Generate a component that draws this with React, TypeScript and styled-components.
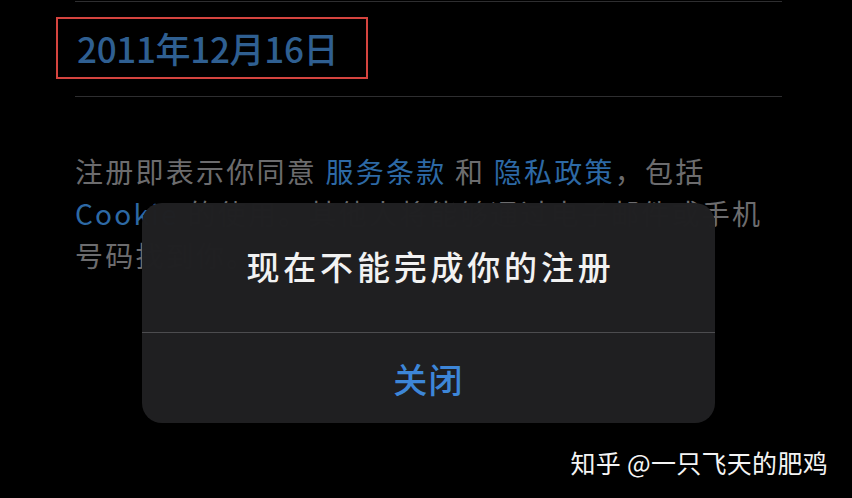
import React from "react";
import styled, { createGlobalStyle } from "styled-components";

const GlobalStyle = createGlobalStyle`
  html, body {
    margin: 0;
    padding: 0;
    background: #000;
  }
  body {
    font-family: "Noto Sans CJK SC", "Noto Sans", sans-serif;
  }
`;

const Screen = styled.div`
  position: relative;
  width: 852px;
  height: 498px;
  overflow: hidden;
  background: #000;
`;

const Content = styled.div`
  display: flex;
  flex-direction: column;
  padding: 1px 70px 0 75px;
`;

const Divider = styled.div`
  height: 1px;
  background: #2e2e30;
`;

const DateBox = styled.div`
  display: flex;
  align-items: center;
  box-sizing: border-box;
  width: 312px;
  height: 62px;
  margin: 15px 0 17px -19px;
  padding: 0 0 2px 19px;
  border: 2px solid #d5443f;
  color: #2f5f91;
  font-size: 35px;
  font-weight: 500;
  letter-spacing: -0.3px;
`;

const Paragraph = styled.div`
  display: flex;
  flex-direction: column;
  margin-top: 53px;
  color: #6c6c6e;
  font-size: 28px;
  line-height: 42px;
  letter-spacing: 2.25px;
  white-space: nowrap;
`;

const Link = styled.span`
  color: #2d69a5;
`;

const Alert = styled.div`
  position: absolute;
  left: 142px;
  top: 203px;
  width: 573px;
  height: 220px;
  display: flex;
  flex-direction: column;
  border-radius: 20px;
  background: rgba(31, 31, 33, 0.99);
  overflow: hidden;
`;

const AlertTitle = styled.div`
  height: 129px;
  display: flex;
  align-items: center;
  justify-content: center;
  padding: 0 0 3px 4px;
  box-sizing: border-box;
  color: #f2f2f2;
  font-size: 33px;
  font-weight: 500;
  letter-spacing: 3.8px;
`;

const AlertRule = styled.div`
  height: 1px;
  background: #4c4c4f;
`;

const AlertButton = styled.div`
  flex: 1;
  display: flex;
  align-items: center;
  justify-content: center;
  color: #3d86d8;
  font-size: 34px;
  font-weight: 500;
  letter-spacing: 1.2px;
`;

const Watermark = styled.div`
  position: absolute;
  right: 24px;
  top: 446px;
  color: #f4f4f4;
  font-size: 25px;
  line-height: 32px;
  letter-spacing: 0.3px;
  white-space: nowrap;
`;

export default function App() {
  return (
    <Screen>
      <GlobalStyle />
      <Content>
        <Divider />
        <DateBox>2011年12月16日</DateBox>
        <Divider />
        <Paragraph>
          <span>
            注册即表示你同意 <Link>服务条款</Link> 和 <Link>隐私政策</Link>，包括
          </span>
          <span>
            <Link>Cookie</Link> 的使用。其他人将能够通过电子邮件或手机
          </span>
          <span>号码找到你。</span>
        </Paragraph>
      </Content>
      <Alert>
        <AlertTitle>现在不能完成你的注册</AlertTitle>
        <AlertRule />
        <AlertButton>关闭</AlertButton>
      </Alert>
      <Watermark>知乎 @一只飞天的肥鸡</Watermark>
    </Screen>
  );
}
